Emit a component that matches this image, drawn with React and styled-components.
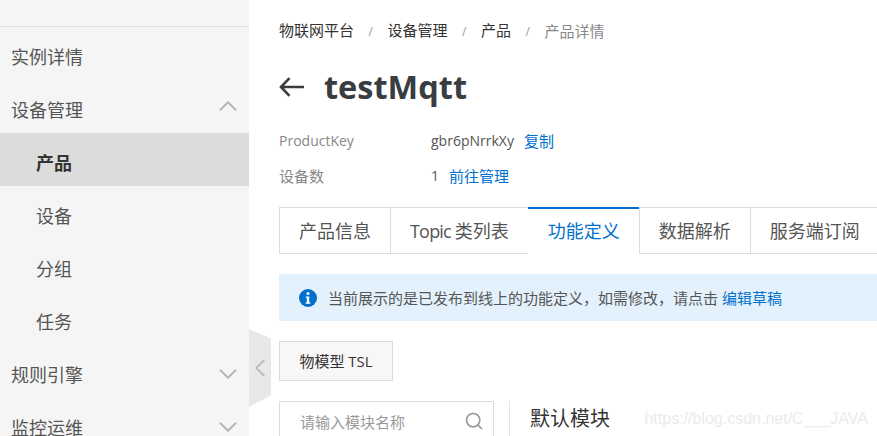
import styled, { createGlobalStyle } from "styled-components";
import { ChevronDown, ChevronLeft, ChevronUp, Search } from "lucide-react";

const FONT = `"Open Sans", "Noto Sans CJK SC", sans-serif`;

const crumbs = ["物联网平台", "设备管理", "产品"];

function App() {
  return (
    <Page>
      <GlobalStyle />
      <Sidebar>
        <MenuList>
          <MenuItem>实例详情</MenuItem>
          <MenuItem>
            设备管理
            <UpIcon size={30} strokeWidth={1.5} />
          </MenuItem>
          <SubItem $active>产品</SubItem>
          <SubItem>设备</SubItem>
          <SubItem>分组</SubItem>
          <SubItem>任务</SubItem>
          <MenuItem>
            规则引擎
            <ChevronDown size={30} strokeWidth={1.5} />
          </MenuItem>
          <MenuItem>
            监控运维
            <ChevronDown size={30} strokeWidth={1.5} />
          </MenuItem>
        </MenuList>
        <Collapse>
          <ChevronLeft size={30} strokeWidth={1.5} />
        </Collapse>
      </Sidebar>
      <Main>
        <Breadcrumb>
          {crumbs.map((c) => (
            <Crumb key={c}>
              {c}
              <Slash>/</Slash>
            </Crumb>
          ))}
          <Crumb $current>产品详情</Crumb>
        </Breadcrumb>
        <TitleRow>
          <svg width="25" height="20" viewBox="0 0 25 20" fill="none" stroke="currentColor" strokeWidth="2.6">
            <path d="M25 10H2M10.5 1.2L2 10l8.5 8.8" />
          </svg>
          <Title>testMqtt</Title>
        </TitleRow>
        <InfoList>
          <InfoRow>
            <InfoLabel>ProductKey</InfoLabel>
            <InfoValue>gbr6pNrrkXy</InfoValue>
            <InfoLink>复制</InfoLink>
          </InfoRow>
          <InfoRow>
            <InfoLabel $cjk>设备数</InfoLabel>
            <InfoValue>1</InfoValue>
            <InfoLink>前往管理</InfoLink>
          </InfoRow>
        </InfoList>
        <Tabs>
          <Tab>产品信息</Tab>
          <Tab>
            <TopicWord>Topic </TopicWord>类列表
          </Tab>
          <Tab $active>功能定义</Tab>
          <Tab>数据解析</Tab>
          <Tab>服务端订阅</Tab>
        </Tabs>
        <Alert>
          <svg width="20" height="20" viewBox="0 0 20 20">
            <circle cx="10" cy="10" r="9" fill="#0070cc" />
            <circle cx="10" cy="5.6" r="1.5" fill="#fff" />
            <path d="M7.8 8.4h3.4v6h1.2v1.4H7.6v-1.4h1.2V9.8H7.8z" fill="#fff" />
          </svg>
          <AlertText>
            当前展示的是已发布到线上的功能定义，如需修改，请点击
            <AlertLink>编辑草稿</AlertLink>
          </AlertText>
        </Alert>
        <TslButton>物模型 TSL</TslButton>
        <Bottom>
          <SearchBox>
            <SearchHint>请输入模块名称</SearchHint>
            <Search size={20} strokeWidth={2} />
          </SearchBox>
          <ModuleTitle>默认模块</ModuleTitle>
        </Bottom>
      </Main>
      <Watermark>https://blog.csdn.net/C___JAVA</Watermark>
    </Page>
  );
}

export default App;

const GlobalStyle = createGlobalStyle`
  html, body {
    margin: 0;
    padding: 0;
    height: 100%;
    overflow: hidden;
    background: #fff;
  }
  #root {
    height: 100%;
  }
`;

const Page = styled.div`
  position: relative;
  display: flex;
  width: 877px;
  height: 436px;
  overflow: hidden;
  font-family: ${FONT};
  color: #333;
`;

const Sidebar = styled.aside`
  position: relative;
  flex: 0 0 249px;
  background: #f5f5f5;
`;

const MenuList = styled.div`
  margin-top: 26px;
  border-top: 1px solid #e0e0e0;
`;

const MenuItem = styled.div`
  display: flex;
  justify-content: space-between;
  align-items: center;
  box-sizing: border-box;
  height: 53px;
  padding: 4px 6px 0 11px;
  font-size: 18px;
  color: #555;
  svg {
    color: #b5b5b5;
  }
`;

const UpIcon = styled(ChevronUp)`
  margin-bottom: 6px;
`;

const SubItem = styled.div`
  display: flex;
  align-items: center;
  box-sizing: border-box;
  height: 53px;
  padding: 4px 0 0 36px;
  font-size: 18px;
  font-weight: ${(p) => (p.$active ? 700 : 400)};
  color: ${(p) => (p.$active ? "#333" : "#555")};
  background: ${(p) => (p.$active ? "#dcdcdc" : "transparent")};
`;

const Collapse = styled.div`
  position: absolute;
  left: 249px;
  top: 329px;
  display: flex;
  justify-content: center;
  align-items: center;
  width: 22px;
  height: 78px;
  color: #bbb;
  background: #e8e8e8;
  clip-path: polygon(0 0, 100% 12%, 100% 85%, 0 100%);
  svg {
    flex: none;
  }
`;

const Main = styled.main`
  flex: 1;
  min-width: 0;
  padding-left: 30px;
`;

const Breadcrumb = styled.div`
  display: flex;
  align-items: center;
  height: 20px;
  margin-top: 21px;
  font-size: 15px;
  line-height: 20px;
`;

const Crumb = styled.span`
  color: ${(p) => (p.$current ? "#888" : "#333")};
`;

const Slash = styled.span`
  display: inline-block;
  width: 33.5px;
  text-align: center;
  font-size: 12px;
  color: #999;
`;

const TitleRow = styled.div`
  display: flex;
  align-items: center;
  gap: 20px;
  height: 44px;
  margin-top: 24px;
  color: #373d41;
`;

const Title = styled.h1`
  margin: 0;
  font-size: 32.5px;
  font-weight: 700;
  line-height: 44px;
`;

const InfoList = styled.div`
  margin-top: 14px;
`;

const InfoRow = styled.div`
  display: flex;
  align-items: center;
  height: 35px;
  font-size: 14px;
`;

const InfoLabel = styled.span`
  flex: 0 0 152px;
  font-size: ${(p) => (p.$cjk ? "15px" : "14px")};
  color: #888;
`;

const InfoValue = styled.span`
  margin-right: 10px;
  color: #555;
`;

const InfoLink = styled.span`
  font-size: 15px;
  color: #0070cc;
`;

const Tabs = styled.div`
  display: flex;
  width: 640px;
  height: 47px;
  margin-top: 14px;
`;

const TopicWord = styled.span`
  letter-spacing: -0.8px;
`;

const Tab = styled.div`
  flex: none;
  box-sizing: border-box;
  height: 47px;
  padding: 0 19px;
  margin-right: -1px;
  font-size: 18px;
  line-height: 46px;
  color: ${(p) => (p.$active ? "#0070cc" : "#555")};
  background: #fff;
  border: 1px solid #dcdcdc;
  ${(p) => p.$active && "border: 0; border-top: 2px solid #0070cc; padding: 0 20px; line-height: 44px;"}
`;

const Alert = styled.div`
  display: flex;
  align-items: center;
  gap: 10px;
  box-sizing: border-box;
  width: 598px;
  height: 47px;
  margin-top: 20px;
  padding-left: 19px;
  background: #e3f1fc;
`;

const AlertText = styled.span`
  font-size: 15px;
  color: #555;
`;

const AlertLink = styled.span`
  margin-left: 4px;
  color: #0070cc;
`;

const TslButton = styled.div`
  box-sizing: border-box;
  width: 114px;
  height: 40px;
  margin-top: 20px;
  font-size: 15px;
  line-height: 38px;
  text-align: center;
  color: #333;
  background: #f7f7f7;
  border: 1px solid #dcdcdc;
`;

const Bottom = styled.div`
  display: flex;
  margin-top: 20px;
`;

const SearchBox = styled.div`
  display: flex;
  justify-content: space-between;
  align-items: center;
  box-sizing: border-box;
  width: 215px;
  height: 40px;
  padding: 0 9px 0 20px;
  border: 1px solid #dcdcdc;
  svg {
    color: #999;
  }
`;

const SearchHint = styled.span`
  font-size: 15px;
  color: #999;
`;

const ModuleTitle = styled.div`
  margin-left: 15px;
  padding-left: 20px;
  height: 40px;
  font-size: 20px;
  line-height: 36px;
  color: #333;
  border-left: 1px solid #e4e4e4;
`;

const Watermark = styled.div`
  position: absolute;
  right: 9px;
  bottom: 8px;
  font-family: "Liberation Sans", sans-serif;
  font-size: 16px;
  color: #ebebeb;
`;
